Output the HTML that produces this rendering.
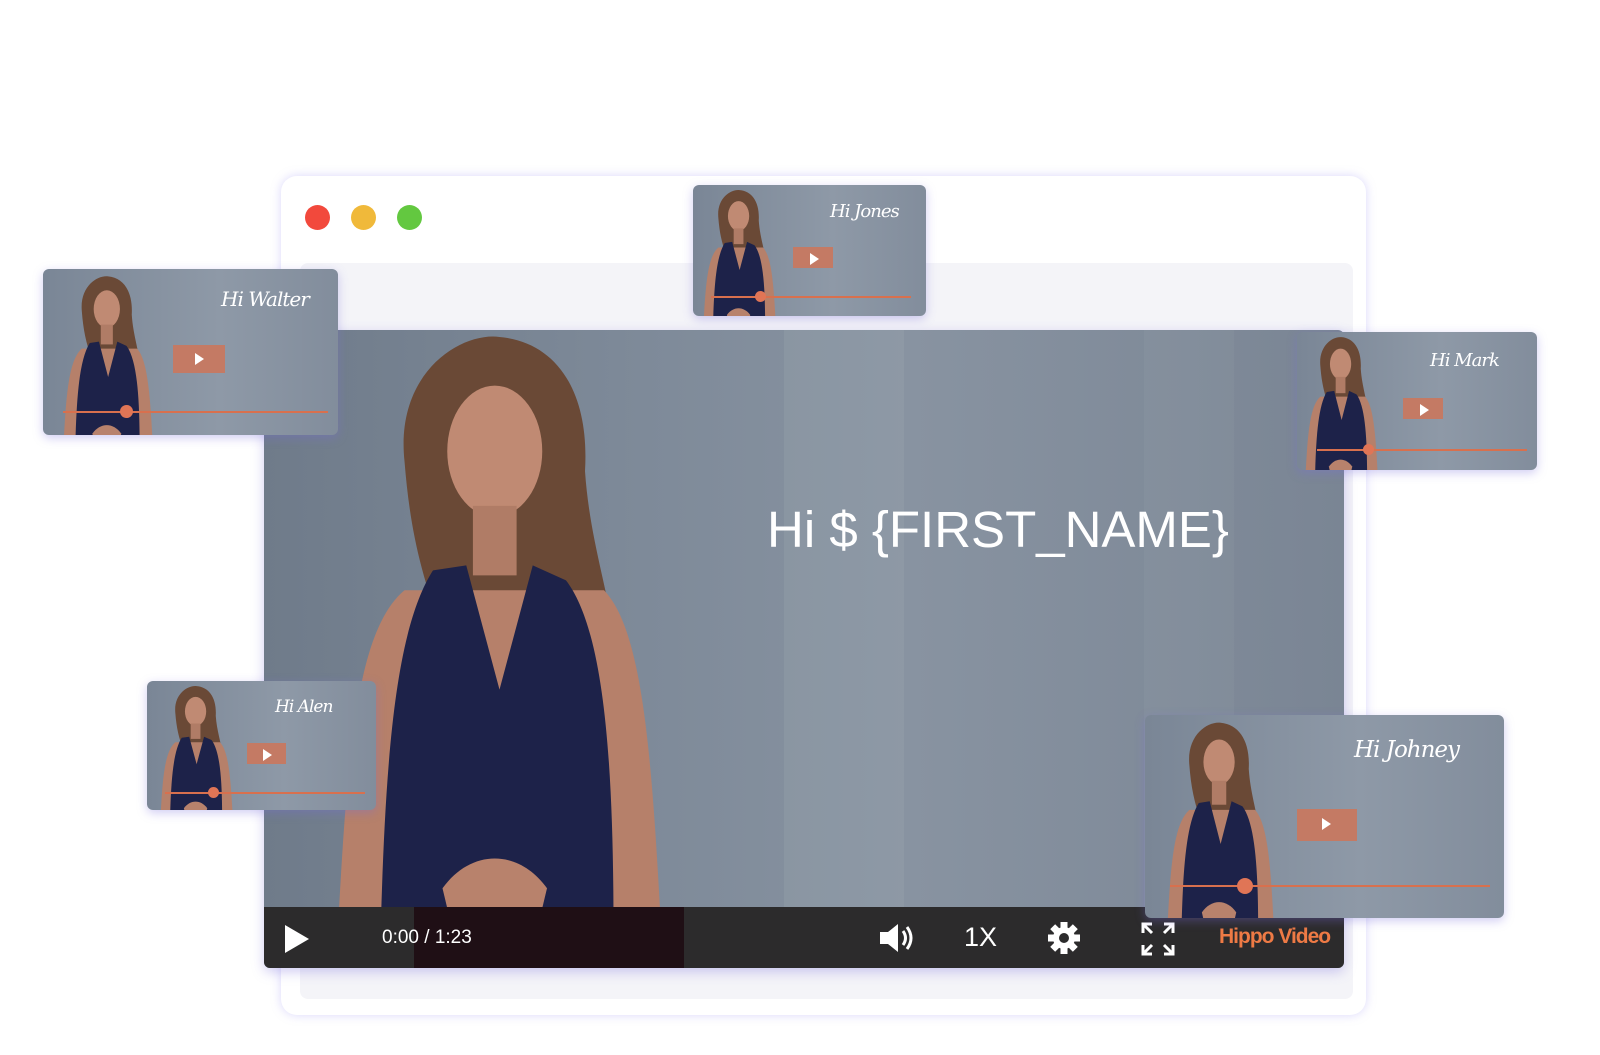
<!DOCTYPE html>
<html><head><meta charset="utf-8"><style>
*{margin:0;padding:0;box-sizing:border-box}
body{width:1600px;height:1055px;background:#fff;position:relative;overflow:hidden;font-family:"Liberation Sans",sans-serif}
.abs{position:absolute}
.browser{left:281px;top:176px;width:1085px;height:839px;background:#fff;border-radius:16px;box-shadow:0 0 10px rgba(150,140,240,.35)}
.inner{left:300px;top:263px;width:1053px;height:736px;background:#f4f4f8;border-radius:8px}
.dot{width:25px;height:25px;border-radius:50%;top:205px}
.video{left:264px;top:330px;width:1080px;height:638px;border-radius:6px;overflow:hidden;background:linear-gradient(90deg,#6f7b8a 0%,#7e8a99 35%,#8893a1 60%,#7a8594 100%);box-shadow:0 4px 12px rgba(120,110,220,.35)}
.bar{left:0;top:577px;width:1080px;height:61px;background:#2c2b2c}
.thumb{border-radius:6px;overflow:hidden;background:linear-gradient(90deg,#7a8696,#8e99a7 60%,#828d9c);box-shadow:0 3px 10px rgba(120,110,220,.35)}
.thumb .t{position:absolute;color:#fff;font-family:"DejaVu Serif",serif;font-style:italic;white-space:nowrap;letter-spacing:-1px}
.thumb .pb{position:absolute;background:#c47a64}
.thumb .pb:after{content:"";position:absolute;left:42%;top:28%;border-left:9px solid #fff;border-top:6px solid transparent;border-bottom:6px solid transparent}
.thumb .ln{position:absolute;height:2px;background:#d8704e}
.thumb .kn{position:absolute;width:13px;height:13px;border-radius:50%;background:#e07556}
</style></head><body>
<svg width="0" height="0" style="position:absolute">
<defs>
<symbol id="w" viewBox="0 0 400 600" preserveAspectRatio="none">
<path d="M110 130 C100 40 170 0 210 5 C270 10 305 60 300 140 C305 210 325 260 335 330 C315 360 280 340 270 300 L150 300 C125 240 115 190 110 130Z" fill="#6a4936"/>
<ellipse cx="205" cy="120" rx="50" ry="66" fill="#c08a73"/>
<rect x="182" y="175" width="46" height="70" fill="#b07c66"/>
<path d="M40 600 C50 420 60 300 110 260 L320 260 C360 300 370 420 380 600Z" fill="#b6806a"/>
<path d="M85 600 C90 430 100 300 140 240 L175 235 L210 360 L245 235 L280 250 C320 300 330 430 330 600Z" fill="#1d2249"/>
<path d="M150 560 C180 520 230 520 260 560 L250 600 L160 600Z" fill="#b8826c"/>
</symbol>
</defs></svg>

<div class="abs browser"></div>
<div class="abs inner"></div>
<div class="abs dot" style="left:305px;background:#f2493c"></div>
<div class="abs dot" style="left:351px;background:#f0b93a"></div>
<div class="abs dot" style="left:397px;background:#63c840"></div>

<div class="abs video">
  <div class="abs" style="left:520px;top:0;width:120px;height:577px;background:rgba(160,170,180,.25)"></div>
  <div class="abs" style="left:880px;top:0;width:90px;height:577px;background:rgba(150,160,170,.2)"></div>
  <svg class="abs" style="left:36px;top:2px" width="380" height="596"><use href="#w"/></svg>
  <div class="abs" style="left:503px;top:170px;color:#fff;font-size:51px;white-space:nowrap">Hi $ {FIRST_NAME}</div>
  <div class="abs bar">
    <div class="abs" style="left:150px;top:0;width:270px;height:61px;background:#1f0f15"></div>
    <svg class="abs" style="left:18px;top:16px" width="30" height="32"><path d="M3 2 L27 16 L3 30Z" fill="#fff"/></svg>
    <div class="abs" style="left:118px;top:20px;color:#fff;font-size:19px">0:00 / 1:23</div>
    <svg class="abs" style="left:614px;top:14px" width="40" height="34"><path d="M2 11 H10 L20 3 V31 L10 23 H2Z" fill="#fff"/><path d="M25 10 Q30 17 25 24 M29 6 Q37 17 29 28" stroke="#fff" stroke-width="3" fill="none"/></svg>
    <div class="abs" style="left:700px;top:15px;color:#fff;font-size:27px">1X</div>
    <svg class="abs" style="left:783px;top:14px" width="34" height="34" viewBox="0 0 34 34"><g fill="#fff" transform="translate(17 17)"><circle r="11"/><g id="tt"><rect x="-3.5" y="-16" width="7" height="8"/></g><use href="#tt" transform="rotate(45)"/><use href="#tt" transform="rotate(90)"/><use href="#tt" transform="rotate(135)"/><use href="#tt" transform="rotate(180)"/><use href="#tt" transform="rotate(225)"/><use href="#tt" transform="rotate(270)"/><use href="#tt" transform="rotate(315)"/></g><circle cx="17" cy="17" r="5" fill="#2c2b2c"/></svg>
    <svg class="abs" style="left:876px;top:14px" width="36" height="36" stroke="#fff" stroke-width="3" fill="none"><path d="M3 12 V3 H12 M3 3 L12 12 M24 3 H33 V12 M33 3 L24 12 M3 24 V33 H12 M3 33 L12 24 M24 33 H33 V24 M33 33 L24 24"/></svg>
    <div class="abs" style="left:955px;top:18px;color:#ee7a45;font-size:21px;font-weight:bold;letter-spacing:-1px;white-space:nowrap">Hippo Video</div>
  </div>
</div>

<!-- Walter -->
<div class="abs thumb" style="left:43px;top:269px;width:295px;height:166px">
  <svg class="abs" style="left:10px;top:6px" width="105" height="170"><use href="#w"/></svg>
  <div class="t" style="left:178px;top:18px;font-size:20px">Hi Walter</div>
  <div class="pb" style="left:130px;top:76px;width:52px;height:28px"></div>
  <div class="ln" style="left:20px;top:142px;width:265px"></div>
  <div class="kn" style="left:77px;top:136px"></div>
</div>
<!-- Jones -->
<div class="abs thumb" style="left:693px;top:185px;width:233px;height:131px">
  <svg class="abs" style="left:2px;top:4px" width="85" height="135"><use href="#w"/></svg>
  <div class="t" style="left:137px;top:16px;font-size:18px">Hi Jones</div>
  <div class="pb" style="left:100px;top:62px;width:40px;height:21px"></div>
  <div class="ln" style="left:18px;top:111px;width:200px"></div>
  <div class="kn" style="left:62px;top:106px;width:11px;height:11px"></div>
</div>
<!-- Mark -->
<div class="abs thumb" style="left:1297px;top:332px;width:240px;height:138px">
  <svg class="abs" style="left:0px;top:4px" width="85" height="140"><use href="#w"/></svg>
  <div class="t" style="left:133px;top:18px;font-size:18px">Hi Mark</div>
  <div class="pb" style="left:106px;top:66px;width:40px;height:21px"></div>
  <div class="ln" style="left:20px;top:117px;width:210px"></div>
  <div class="kn" style="left:66px;top:112px;width:11px;height:11px"></div>
</div>
<!-- Alen -->
<div class="abs thumb" style="left:147px;top:681px;width:229px;height:129px">
  <svg class="abs" style="left:5px;top:4px" width="85" height="132"><use href="#w"/></svg>
  <div class="t" style="left:128px;top:16px;font-size:17px">Hi Alen</div>
  <div class="pb" style="left:100px;top:62px;width:39px;height:21px"></div>
  <div class="ln" style="left:18px;top:111px;width:200px"></div>
  <div class="kn" style="left:61px;top:106px;width:11px;height:11px"></div>
</div>
<!-- Johney -->
<div class="abs thumb" style="left:1145px;top:715px;width:359px;height:203px">
  <svg class="abs" style="left:10px;top:6px" width="125" height="205"><use href="#w"/></svg>
  <div class="t" style="left:209px;top:22px;font-size:23px">Hi Johney</div>
  <div class="pb" style="left:152px;top:94px;width:60px;height:32px"></div>
  <div class="ln" style="left:25px;top:170px;width:320px"></div>
  <div class="kn" style="left:92px;top:163px;width:16px;height:16px"></div>
</div>
</body></html>
